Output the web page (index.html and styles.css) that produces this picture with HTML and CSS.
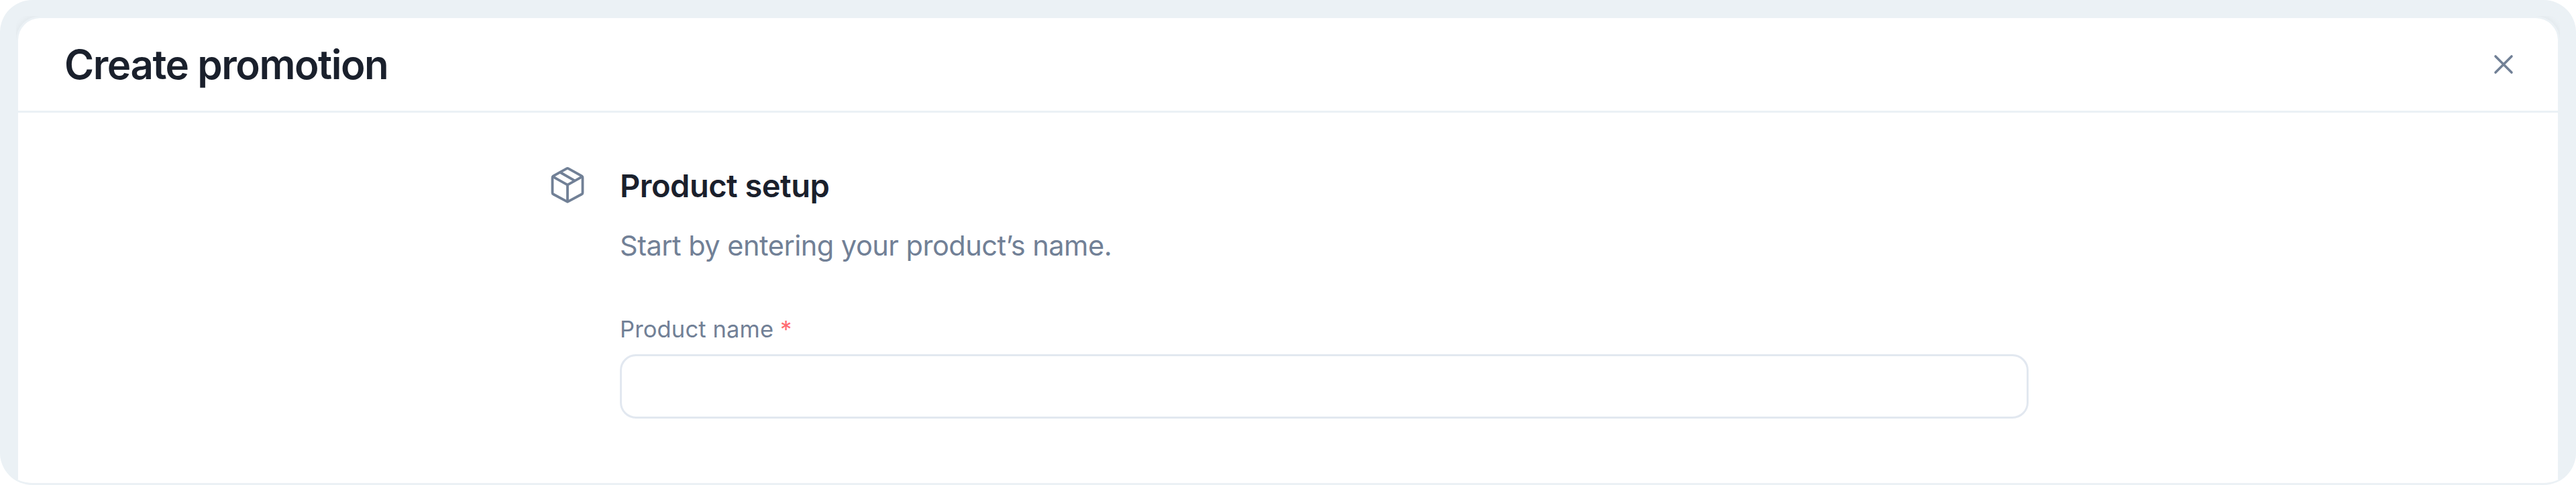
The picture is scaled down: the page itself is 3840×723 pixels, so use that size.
FILE: index.html
```html
<!DOCTYPE html>
<html lang="en">
<head>
    <meta charset="UTF-8">
    <meta name="viewport" content="width=device-width, initial-scale=1.0">
    <link rel="stylesheet" href="styles.css">
    <title>Create promotion</title>
</head>

<body>
    <div class="frame">
        <div class="panel-wrap">
            <div class="panel">
                <header class="header">
                    <h1 class="title">Create promotion</h1>
                    <button class="close" type="button" aria-label="Close">
                        <svg viewBox="0 0 48 48" fill="none" stroke="currentColor" stroke-width="3.6" stroke-linecap="round">
                            <path d="M12 12L36 36M36 12L12 36" />
                        </svg>
                    </button>
                </header>

                <main class="content">
                    <svg class="box-icon" viewBox="0 0 72 72" fill="none" stroke="currentColor" stroke-width="3.8" stroke-linejoin="round" stroke-linecap="round">
                        <path d="M34.6 11.3Q36 10.5 37.4 11.3L57.2 22.4Q58.5 23.2 58.5 24.7V47.2Q58.5 48.7 57.2 49.5L37.4 60.2Q36 61 34.6 60.2L14.8 49.5Q13.5 48.7 13.5 47.2V24.7Q13.5 23.2 14.8 22.4Z" />
                        <path d="M14.2 23.4L36 35.6L57.8 23.4M36 35.6V60.5M25.2 17L46.8 29.4" />
                    </svg>
                    <div class="setup">
                        <h2 class="setup-title">Product setup</h2>
                        <p class="setup-text">Start by entering your product’s name.</p>
                        <label class="label" for="name">Product name <span class="required">*</span></label>
                        <input class="input" id="name" type="text">
                    </div>
                </main>
            </div>
        </div>
    </div>
</body>
</html>
```
FILE: styles.css
```css
* {
    box-sizing: border-box;
}

body {
    margin: 0;
    background: #ffffff;
    font-family: Inter, "Liberation Sans", sans-serif;
    color: #1a202c;
    overflow: hidden;
}

.frame {
    height: 723px;
    padding: 24px 24px 0;
    background: #ebf1f5;
    border-radius: 48px;
    border-bottom: 3px solid #ebf1f5;
    overflow: hidden;
}

/* clips the shadow so it shows only behind the rounded corners */
.panel-wrap {
    height: 696px;
    overflow: hidden;
}

.panel {
    height: 696px;
    background: #ffffff;
    border: 3px solid #ebf1f5;
    border-bottom: none;
    border-radius: 36px 36px 0 0;
    box-shadow: 0 0 12px rgba(0, 0, 0, 0.06);
}

.header {
    display: flex;
    align-items: center;
    justify-content: space-between;
    height: 141px;
    padding: 0 57px 0 69px;
    border-bottom: 3px solid #ebf1f5;
}

.title {
    margin: 0;
    font-size: 60px;
    line-height: 72px;
    font-weight: 600;
    letter-spacing: -1.45px;
}

.close {
    display: flex;
    width: 48px;
    height: 48px;
    padding: 0;
    border: none;
    background: none;
    color: #718096;
}

.close svg {
    width: 48px;
    height: 48px;
}

.content {
    display: flex;
    gap: 42px;
    padding: 72px 0 0 783px;
}

.box-icon {
    flex: none;
    width: 72px;
    height: 72px;
    color: #718096;
}

.setup {
    display: flex;
    flex-direction: column;
    width: 2100px;
}

.setup-title {
    margin: 0 0 22px;
    font-size: 47px;
    line-height: 74px;
    font-weight: 600;
    letter-spacing: -0.5px;
}

.setup-text {
    margin: 0 0 71px;
    font-size: 41.5px;
    line-height: 60px;
    letter-spacing: -0.5px;
    color: #718096;
}

.label {
    margin-bottom: 13px;
    font-size: 34.5px;
    line-height: 48px;
    letter-spacing: 0.15px;
    color: #718096;
}

.required {
    color: #ff6b70;
}

.input {
    width: 100%;
    height: 96px;
    padding: 0 33px;
    border: 3px solid #e2e8f0;
    border-radius: 24px;
    background: #ffffff;
    font: inherit;
    font-size: 42px;
    outline: none;
}
```
